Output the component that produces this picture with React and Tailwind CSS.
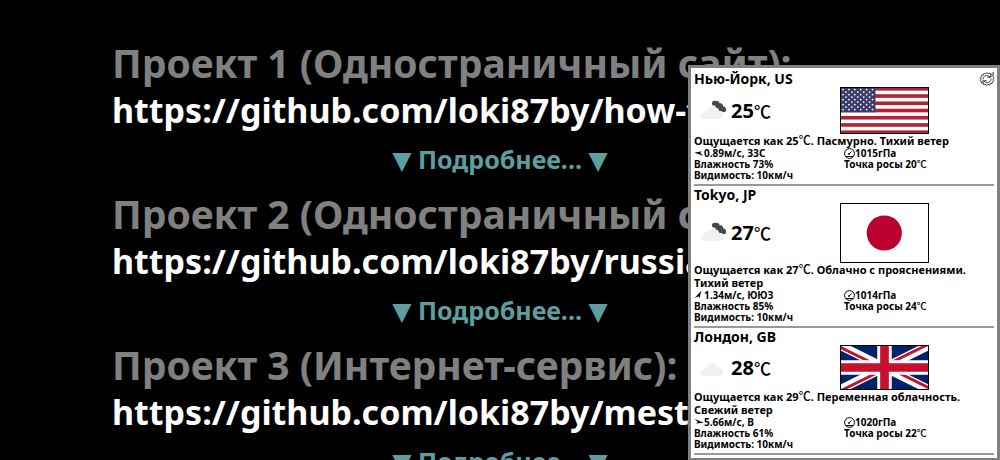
import React from "react";

const projects = [
  { title: "Проект 1 (Одностраничный сайт):", url: "https://github.com/loki87by/how-to-learn" },
  { title: "Проект 2 (Одностраничный сайт):", url: "https://github.com/loki87by/russian-travel" },
  { title: "Проект 3 (Интернет-сервис):", url: "https://github.com/loki87by/mesto" },
];

const cities = [
  {
    name: "Нью-Йорк, US", temp: 25, feels: 25, text: "Пасмурно. Тихий ветер", wind: "0.89м/с, ЗЗС", angle: 184,
    pressure: 1015, humidity: 73, dew: 20, dark: true, Flag: FlagUS,
  },
  {
    name: "Tokyo, JP", temp: 27, feels: 27, text: "Облачно с прояснениями. Тихий ветер", wind: "1.34м/с, ЮЮЗ", angle: -62,
    pressure: 1014, humidity: 85, dew: 24, dark: true, Flag: FlagJP,
  },
  {
    name: "Лондон, GB", temp: 28, feels: 29, text: "Переменная облачность. Свежий ветер", wind: "5.66м/с, В", angle: 8,
    pressure: 1020, humidity: 61, dew: 22, dark: false, Flag: FlagGB,
  },
];

function FlagUS() {
  const stars = [];
  for (let r = 0; r < 9; r++) {
    const n = r % 2 ? 5 : 6;
    for (let c = 0; c < n; c++) {
      stars.push(<circle key={r + "-" + c} cx={(r % 2 ? 6 : 3) + c * 5.9} cy={2.6 + r * 2.5} r="0.9" fill="#fff" />);
    }
  }
  return (
    <svg viewBox="0 0 89 47" className="block w-[89px] h-[47px]" role="img" aria-label="US">
      <rect width="89" height="47" fill="#fff" />
      {[0, 2, 4, 6, 8, 10, 12].map((i) => (
        <rect key={i} y={(i * 47) / 13} width="89" height={47 / 13} fill="#b22234" />
      ))}
      <rect width="35.5" height="25.3" fill="#3c3b6e" />
      {stars}
      <rect x="0.5" y="0.5" width="88" height="46" fill="none" stroke="#000" />
    </svg>
  );
}

function FlagJP() {
  return (
    <svg viewBox="0 0 89 60" className="block w-[89px] h-[60px]" role="img" aria-label="JP">
      <rect x="0.5" y="0.5" width="88" height="59" fill="#fff" stroke="#000" />
      <circle cx="44.3" cy="30" r="17.6" fill="#bc002d" />
    </svg>
  );
}

function FlagGB() {
  return (
    <svg viewBox="0 0 60 30" preserveAspectRatio="none" className="block w-[89px] h-[45px] border border-black" role="img" aria-label="GB">
      <clipPath id="gb-saltire">
        <path d="M30 15H60V30ZM30 15V30H0ZM30 15H0V0ZM30 15V0H60Z" />
      </clipPath>
      <path d="M0 0H60V30H0Z" fill="#012169" />
      <path d="M0 0L60 30M60 0L0 30" stroke="#fff" strokeWidth="6" />
      <path d="M0 0L60 30M60 0L0 30" clipPath="url(#gb-saltire)" stroke="#c8102e" strokeWidth="4" />
      <path d="M30 0V30M0 15H60" stroke="#fff" strokeWidth="10" />
      <path d="M30 0V30M0 15H60" stroke="#c8102e" strokeWidth="6" />
    </svg>
  );
}

function Cloud({ dark }) {
  return (
    <svg viewBox="0 0 30 24" className="block w-[30px] h-6 shrink-0" aria-hidden="true">
      <path d="M5 20C2.500 20 1 18.600 1 16.700C1 14.900 2.600 13.900 4 13.600C4.200 11.800 6 11.100 7.200 11.400C8.200 8.900 10 7.500 12.600 7.500C15.500 7.500 17.500 9.200 18 11.600C20.800 11.700 23 13.500 23 16C23 18.500 21.300 20 19 20Z" fill="#f0f0f0" />
      {dark && (
        <path d="M12 5C11.500 2.800 13.500 1.200 15.600 2.100C17.200 1.300 19.300 2.600 19.700 4.400C21.600 3.900 23 5.400 23.100 7.200C25.600 7.500 26.700 10 25.800 12.200C24.600 13.800 22.500 13.300 21.400 12C19.500 12.400 18.200 11 18.200 9.200C16.600 9.400 15.300 8.200 15.100 6.500C13.700 6.900 12.300 6.400 12 5Z" fill="#484848" />
      )}
    </svg>
  );
}

function WindArrow({ angle }) {
  return (
    <svg viewBox="0 0 10 10" className="w-[10px] h-[10px] shrink-0" aria-hidden="true">
      <path d="M0.300 2.600L9.800 5L2.200 7L3.800 5.200Z" fill="#000" transform={`rotate(${angle} 5 5)`} />
    </svg>
  );
}

function Gauge() {
  return (
    <svg viewBox="0 0 11 11" className="w-[11px] h-[11px] shrink-0" fill="none" stroke="#000" aria-hidden="true">
      <circle cx="5.500" cy="5.500" r="4.900" strokeWidth="1" />
      <path d="M4.600 6.400L7.500 3.500M2.200 8.500H8.800" strokeWidth="1" />
      <circle cx="5" cy="6" r="0.700" fill="#000" strokeWidth="0.4" />
    </svg>
  );
}

function RefreshIcon() {
  return (
    <svg viewBox="0 0 16 16" className="block w-4 h-4" fill="none" stroke="#222" strokeWidth="0.800" aria-hidden="true">
      <path d="M2.500 10.500L1 9.500L2.200 8.200L1.200 6.600L2.800 5.800L2.600 4L4.400 4L5 2.200L6.600 3L8 1.400L9.200 2.900L11 2L11.700 3.700L14.500 1.500L13.800 5.500L15 7L13.800 8.200L14.800 9.800L13.200 10.600L13.200 12.400L11.300 12.400L10.600 14.200L9 13.300L7.600 14.700L6.500 13.200L4.700 13.900L4.200 12.100L2.300 12.100Z" />
      <path d="M4 8.500C4 6 6 4.200 8.500 4.600L11 6L12.200 3.500M12 7.500C12.300 10 9.800 12.300 7.300 11.800L5 10.200L3.800 12.200M13.500 4.500L11 6.500L8 6.200M2.800 10.200L5.300 9.500L8 10" />
    </svg>
  );
}

function Celsius({ className }) {
  return <span className={"font-['Noto_Sans_CJK_JP',sans-serif] font-medium leading-none " + className}>℃</span>;
}

function City({ city }) {
  const { Flag } = city;
  return (
    <section className="border-b-2 border-[#999] pb-[3px]">
      <h3 className="text-[14px] leading-[17px]">{city.name}</h3>
      <div className="flex items-center">
        <div className="flex w-[146px] shrink-0 items-center pl-[6px]">
          <Cloud dark={city.dark} />
          <p className="pl-px text-[20px] leading-6">
            {city.temp}
            <Celsius className="text-[17px]" />
          </p>
        </div>
        <Flag />
      </div>
      <p className="text-[11px] leading-[13px]">
        Ощущается как {city.feels}
        <Celsius className="text-[12px]" />. {city.text}
      </p>
      <div className="grid grid-cols-2 text-[10px] leading-[11px]">
        <p className="flex h-3 items-center">
          <WindArrow angle={city.angle} />
          {city.wind}
        </p>
        <p className="flex h-3 items-center">
          <Gauge />
          {city.pressure}гПа
        </p>
        <p>Влажность {city.humidity}%</p>
        <p>
          Точка росы {city.dew}
          <Celsius className="text-[10px]" />
        </p>
        <p>Видимость: 10км/ч</p>
      </div>
    </section>
  );
}

export default function App() {
  return (
    <div className="relative h-screen overflow-hidden bg-black font-['Noto_Sans','DejaVu_Sans',sans-serif] font-bold">
      <main className="px-28 pt-9 whitespace-nowrap">
        {projects.map((p) => (
          <article key={p.title} className="flex flex-col items-start pb-[15px]">
            <h2 className="text-[39px] leading-[54px] text-[#808080]">{p.title}</h2>
            <a href={p.url} className="text-[34px] leading-[40px] text-white">{p.url}</a>
            <button type="button" className="mt-4 h-[26px] self-center text-[25px] leading-[26px] text-[#5f9ea0]">
              ▼ Подробнее... ▼
            </button>
          </article>
        ))}
      </main>
      <aside className="absolute top-[65px] right-0 w-[312px] border-[3px] border-[#808080] bg-white px-[3px] pt-[2px] pb-[3px] text-black">
        <button type="button" aria-label="Обновить" className="absolute top-[3px] right-[2px]">
          <RefreshIcon />
        </button>
        {cities.map((c) => (
          <City key={c.name} city={c} />
        ))}
      </aside>
    </div>
  );
}
